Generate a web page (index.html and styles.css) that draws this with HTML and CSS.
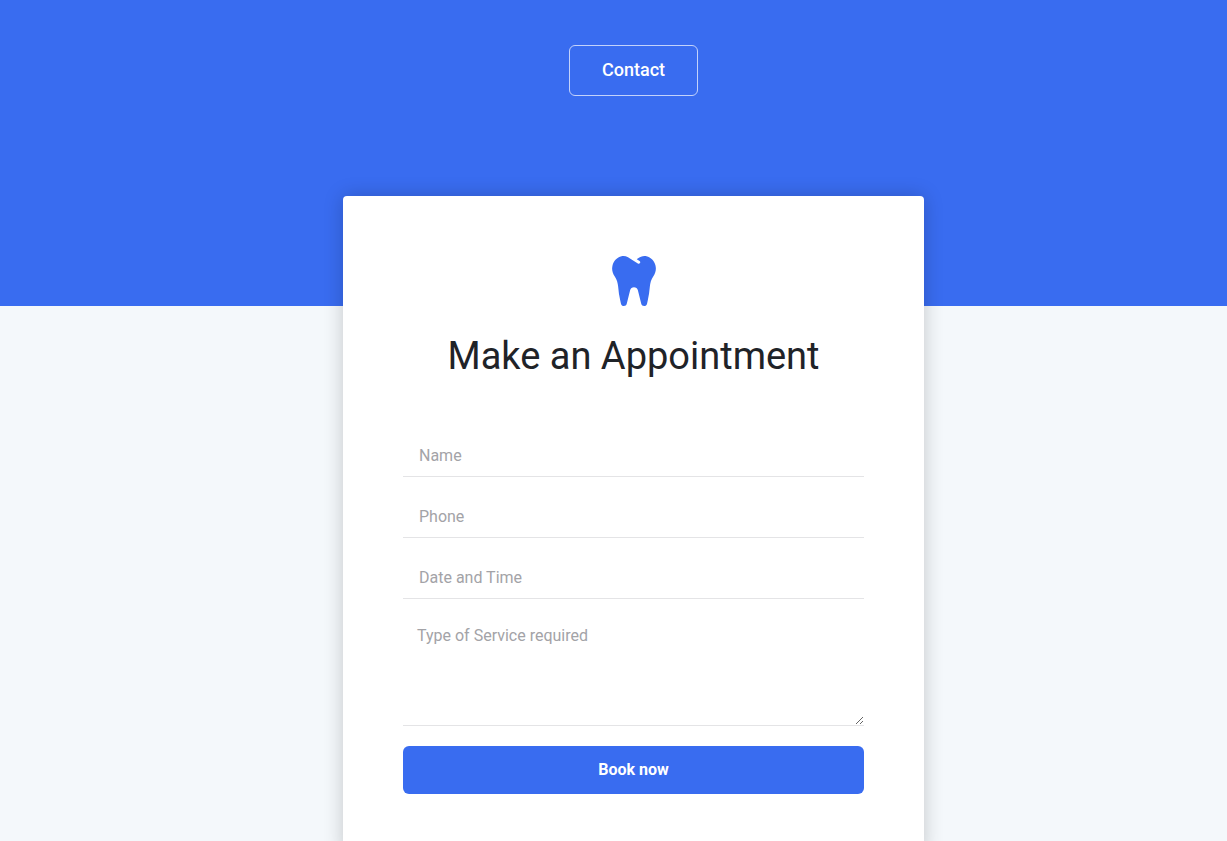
FILE: index.html
```html
<!DOCTYPE html>
<html lang="en">
<head>
  <meta charset="utf-8">
  <meta name="viewport" content="width=device-width, initial-scale=1">
  <title>Make an Appointment</title>
  <link rel="stylesheet" href="styles.css">
</head>
<body>
  <header class="hero">
    <a class="contact-link" href="#appointment">Contact</a>
  </header>
  <main class="content">
    <section class="card" id="appointment">
      <svg class="tooth" viewBox="0 0 448 512" aria-hidden="true"><path fill="currentColor" d="M443.98 96.25c-11.01-45.22-47.11-82.06-92.01-93.72-32.19-8.36-63 5.1-89.14 24.33-3.25 2.39-6.96 3.73-10.5 5.48l28.32 18.21c7.42 4.77 9.58 14.67 4.8 22.11-4.46 6.95-14.27 9.86-22.11 4.8L162.83 12.84c-20.7-10.85-43.38-16.4-66.81-10.31-44.9 11.67-81 48.5-92.01 93.72-10.13 41.62-.42 80.81 21.5 110.43 23.36 31.57 32.68 68.66 36.29 107.35 4.4 47.16 10.33 94.16 20.94 140.32l7.8 33.95c3.19 13.87 15.49 23.7 29.67 23.7 13.97 0 26.15-9.55 29.54-23.16l34.47-138.42c4.56-18.32 20.96-31.16 39.76-31.16s35.2 12.85 39.76 31.16l34.47 138.42c3.39 13.61 15.57 23.16 29.54 23.16 14.18 0 26.48-9.83 29.67-23.7l7.8-33.95c10.61-46.15 16.53-93.16 20.94-140.32 3.61-38.7 12.93-75.78 36.29-107.35 21.95-29.61 31.66-68.8 21.53-110.42z"/></svg>
      <h1 class="title">Make an Appointment</h1>
      <form class="form">
        <input class="field" type="text" placeholder="Name" aria-label="Name">
        <input class="field" type="tel" placeholder="Phone" aria-label="Phone">
        <input class="field" type="text" placeholder="Date and Time" aria-label="Date and Time">
        <textarea class="field field-area" placeholder="Type of Service required" aria-label="Type of Service required"></textarea>
        <button class="submit" type="submit">Book now</button>
      </form>
    </section>
  </main>
</body>
</html>
```
FILE: styles.css
```css
*,
*::before,
*::after {
  box-sizing: border-box;
}

body {
  margin: 0;
  min-height: 100vh;
  background: #f4f8fb;
  color: #1f2328;
  font-family: Roboto, "Liberation Sans", sans-serif;
  font-size: 16px;
  line-height: 24px;
}

.hero {
  display: flex;
  justify-content: center;
  padding: 45px 0 210px 40px;
  background: #396cf0;
}

.contact-link {
  padding: 12px 32px 13px;
  border: 1px solid #c3d2fb;
  border-radius: 6px;
  color: #fff;
  font-size: 18px;
  font-weight: 500;
  line-height: 24px;
  text-decoration: none;
}

.content {
  display: flex;
  justify-content: center;
  margin-top: -110px;
  padding-left: 40px;
}

.card {
  display: flex;
  flex-direction: column;
  align-items: center;
  width: 100%;
  max-width: 581px;
  padding: 60px;
  border-radius: 4px;
  background: #fff;
  box-shadow: 0 0 20px rgba(0, 0, 0, 0.2);
}

.tooth {
  width: 44px;
  height: 50px;
  color: #396cf0;
}

.title {
  margin: 26px 0 56px;
  font-size: 38px;
  font-weight: 400;
  line-height: 48px;
  text-align: center;
}

.form {
  display: flex;
  flex-direction: column;
  gap: 20px;
  width: 100%;
}

.field {
  width: 100%;
  height: 41px;
  margin: 0;
  padding: 0 16px 2px;
  border: 0;
  border-bottom: 1px solid #e4e4e6;
  border-radius: 0;
  outline: 0;
  background: transparent;
  color: inherit;
  font: inherit;
}

.field::placeholder {
  color: #a3a3a7;
  opacity: 1;
}

.field-area {
  height: 107px;
  padding: 5px 14px;
  resize: vertical;
}

.submit {
  height: 48px;
  border: 0;
  border-radius: 6px;
  background: #396cf0;
  color: #fff;
  font: inherit;
  font-weight: 700;
  cursor: pointer;
}
```
